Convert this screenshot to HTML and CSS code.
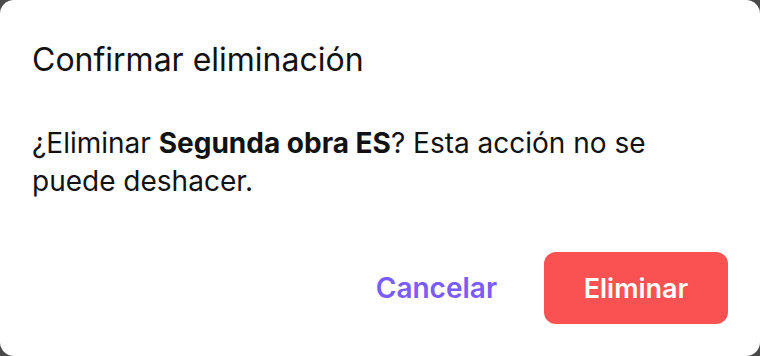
FILE: index.html
```html
<!DOCTYPE html>
<html lang="es">
<head>
  <meta charset="UTF-8">
  <meta name="viewport" content="width=device-width, initial-scale=1.0">
  <title>Confirmar eliminación</title>
  <link rel="stylesheet" href="styles.css">
</head>
<body>
  <div class="dialog">
    <h2 class="dialog-title">Confirmar eliminación</h2>
    <p class="dialog-text">¿Eliminar <strong>Segunda obra ES</strong>? Esta acción no se puede deshacer.</p>
    <div class="dialog-actions">
      <button class="btn-cancel">Cancelar</button>
      <button class="btn-delete">Eliminar</button>
    </div>
  </div>
</body>
</html>
```

FILE: styles.css
```css
html, body {
  height: 100%;
}
body {
  margin: 0;
  background: #4a4a4a; /* backdrop */
  font-family: Inter, "Noto Sans", sans-serif;
}
.dialog {
  box-sizing: border-box;
  height: 100%;
  background: #fff;
  border-radius: 14px;
  padding: 32px;
  display: flex;
  flex-direction: column;
}
.dialog-title {
  margin: 9px 0 0;
  font-size: 32px;
  font-weight: 400;
  color: #111;
  line-height: 1.2;
}
.dialog-text {
  margin: 45px 0 0;
  font-size: 28px;
  line-height: 38px;
  color: #111;
  max-width: 660px;
}
.dialog-text strong {
  font-weight: 700;
}
.dialog-actions {
  margin-top: auto;
  display: flex;
  justify-content: flex-end;
  align-items: center;
  gap: 47px;
}
button {
  font-family: inherit;
  font-size: 27px;
  font-weight: 600;
  border: none;
  cursor: pointer;
}
.btn-cancel {
  background: none;
  color: #7a5cfa;
  font-size: 28px;
  padding: 0;
}
.btn-delete {
  background: #fa5252;
  color: #fff;
  width: 184px;
  height: 72px;
  border-radius: 12px;
}
```
